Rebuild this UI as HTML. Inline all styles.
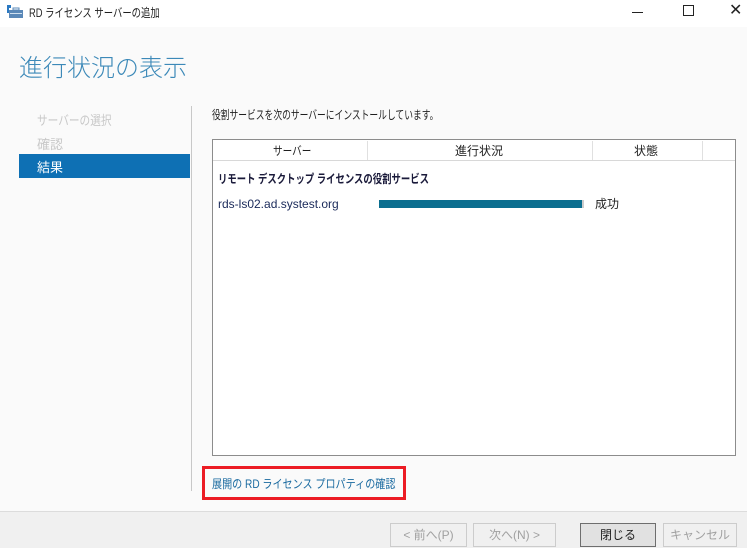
<!DOCTYPE html>
<html><head><meta charset="utf-8"><style>
*{margin:0;padding:0;box-sizing:border-box}
body{width:747px;height:548px;overflow:hidden;background:#fafafa;font-family:"Liberation Sans","Noto Sans CJK JP",sans-serif;position:relative;font-size:12px;color:#1e1e1e}
.a{position:absolute;transform-origin:left center;white-space:nowrap}
</style></head><body>
<div class="a" style="left:0;top:0;width:747px;height:27px;background:#fff"></div>
<svg class="a" style="left:7px;top:5px" width="18" height="14"><rect x="0" y="0" width="4" height="3" fill="#2b79c2"/><rect x="0" y="3" width="2" height="5" fill="#2b79c2"/><rect x="2" y="5" width="14" height="8" fill="#5a88b8"/><rect x="6" y="3" width="6" height="2" fill="none" stroke="#5a88b8"/><rect x="3" y="8" width="12" height="1" fill="#cfe0f0"/></svg>
<div class="a" style="left:29px;top:4px;font-size:12px;transform:scaleX(0.78)">RD ライセンス サーバーの追加</div>
<div class="a" style="left:632px;top:12px;width:11px;height:1px;background:#222"></div>
<div class="a" style="left:683px;top:5px;width:11px;height:11px;border:1px solid #222"></div>
<div class="a" style="left:729px;top:0px;font-size:16px;color:#222">✕</div>
<div class="a" style="left:19px;top:48px;font-size:24px;color:#3c89b8;font-weight:300">進行状況の表示</div>
<div class="a" style="left:37px;top:110px;color:#c8c8c8;font-size:13px;transform:scaleX(0.82)">サーバーの選択</div>
<div class="a" style="left:37px;top:134px;color:#c8c8c8;font-size:13px">確認</div>
<div class="a" style="left:19px;top:154px;width:171px;height:24px;background:#0e70b4"></div>
<div class="a" style="left:37px;top:157px;color:#fff;font-size:13px">結果</div>
<div class="a" style="left:191px;top:106px;width:1px;height:385px;background:#c8c8c8"></div>
<div class="a" style="left:212px;top:106px;transform:scaleX(0.73)">役割サービスを次のサーバーにインストールしています。</div>
<div class="a" style="left:212px;top:139px;width:524px;height:317px;background:#fff;border:1px solid #8c8c8c"></div>
<div class="a" style="left:213px;top:140px;width:522px;height:21px;border-bottom:1px solid #d8d8d8"></div>
<div class="a" style="left:367px;top:141px;width:1px;height:19px;background:#e0e0e0"></div>
<div class="a" style="left:592px;top:141px;width:1px;height:19px;background:#e0e0e0"></div>
<div class="a" style="left:702px;top:141px;width:1px;height:19px;background:#e0e0e0"></div>
<div class="a" style="left:273px;top:142px;transform:scaleX(0.8)">サーバー</div>
<div class="a" style="left:455px;top:142px">進行状況</div>
<div class="a" style="left:634px;top:142px">状態</div>
<div class="a" style="left:218px;top:170px;font-weight:bold;color:#1a1a3a;transform:scaleX(0.78)">リモート デスクトップ ライセンスの役割サービス</div>
<div class="a" style="left:218px;top:197px;color:#1a2a5a">rds-ls02.ad.systest.org</div>
<div class="a" style="left:379px;top:200px;width:203px;height:8px;background:#0b6e8f"></div>
<div class="a" style="left:582px;top:200px;width:2px;height:8px;background:#ccc"></div>
<div class="a" style="left:595px;top:195px">成功</div>
<div class="a" style="left:202px;top:466px;width:204px;height:34px;border:3px solid #ec1c24"></div>
<div class="a" style="left:212px;top:475px;color:#1a6aa0;transform:scaleX(0.84)">展開の RD ライセンス プロパティの確認</div>
<div class="a" style="left:0;top:511px;width:747px;height:37px;background:#f0f0f0;border-top:1px solid #dcdcdc"></div>
<div class="a" style="left:390px;top:523px;width:77px;height:24px;border:1px solid #ccc;color:#a0a0a0;text-align:center;line-height:22px">&lt; 前へ(P)</div>
<div class="a" style="left:473px;top:523px;width:83px;height:24px;border:1px solid #ccc;color:#a0a0a0;text-align:center;line-height:22px">次へ(N) &gt;</div>
<div class="a" style="left:580px;top:523px;width:76px;height:24px;border:1px solid #6e6e6e;background:#e1e1e1;text-align:center;line-height:22px">閉じる</div>
<div class="a" style="left:663px;top:523px;width:74px;height:24px;border:1px solid #ccc;color:#a0a0a0;text-align:center;line-height:22px">キャンセル</div>
</body></html>
